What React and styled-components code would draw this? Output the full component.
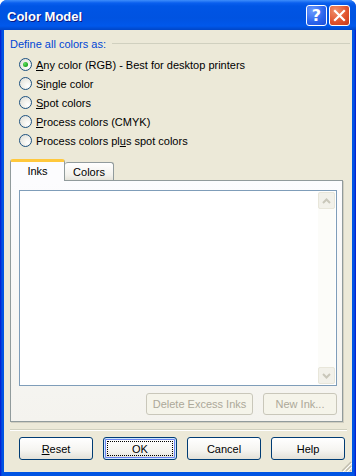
import styled, { createGlobalStyle, css } from 'styled-components'
import { useState } from 'react'

const Global = createGlobalStyle`
  html, body { margin: 0; padding: 0; background: #fff; }
  body { font-family: "Liberation Sans", Tahoma, sans-serif; font-size: 11px; color: #000; }
`

const options = [
  { pre: '', key: 'A', post: 'ny color (RGB) - Best for desktop printers' },
  { pre: 'S', key: 'i', post: 'ngle color' },
  { pre: '', key: 'S', post: 'pot colors' },
  { pre: '', key: 'P', post: 'rocess colors (CMYK)' },
  { pre: 'Process colors pl', key: 'u', post: 's spot colors' },
]

export default function App() {
  const [choice, setChoice] = useState(0)
  const [tab, setTab] = useState('inks')

  return (
    <>
      <Global />
      <Window>
        <TitleBar>
          <Title>Color Model</Title>
          <Caption>
            <CapButton $kind="help">?</CapButton>
            <CapButton $kind="close">
              <svg width="13" height="13" viewBox="0 0 13 13">
                <path d="M2 2 L11 11 M11 2 L2 11" stroke="#fff" strokeWidth="2.2" strokeLinecap="square" />
              </svg>
            </CapButton>
          </Caption>
        </TitleBar>

        <Client>
          <GroupHeader>
            <span>Define all colors as:</span>
            <Rule />
          </GroupHeader>

          <RadioList>
            {options.map((o, i) => (
              <RadioRow key={i} onClick={() => setChoice(i)}>
                <RadioDot $checked={choice === i} />
                <span>{o.pre}<u>{o.key}</u>{o.post}</span>
              </RadioRow>
            ))}
          </RadioList>

          <TabStrip>
            <Tab $active={tab === 'inks'} $w={55} onClick={() => setTab('inks')}>Inks</Tab>
            <Tab $active={tab === 'colors'} $w={49} onClick={() => setTab('colors')}>Colors</Tab>
          </TabStrip>
          <TabPanel>
            <ListBox>
              <ListArea />
              <ScrollBar>
                <ScrollBtn>
                  <svg width="9" height="6" viewBox="0 0 9 6">
                    <path d="M1 5 L4.5 1.5 L8 5" stroke="#c9c7ba" strokeWidth="2" fill="none" />
                  </svg>
                </ScrollBtn>
                <ScrollBtn>
                  <svg width="9" height="6" viewBox="0 0 9 6">
                    <path d="M1 1 L4.5 4.5 L8 1" stroke="#c9c7ba" strokeWidth="2" fill="none" />
                  </svg>
                </ScrollBtn>
              </ScrollBar>
            </ListBox>
            <PanelActions>
              <Button $w={107} disabled>Delete Excess Inks</Button>
              <Button $w={74} disabled>New Ink...</Button>
            </PanelActions>
          </TabPanel>

          <Separator />

          <Footer>
            <Button $w={74}><u>R</u>eset</Button>
            <Button $w={74} $default>OK</Button>
            <Button $w={74}>Cancel</Button>
            <Button $w={74}>Help</Button>
          </Footer>

          <Grip>
            <svg width="12" height="12" viewBox="0 0 12 12">
              <path d="M11 2 L2 11 M11 6 L6 11 M11 10 L10 11" stroke="#c0bdad" strokeWidth="1.4" />
              <path d="M12 3 L3 12 M12 7 L7 12" stroke="#fff" strokeWidth="1" />
            </svg>
          </Grip>
        </Client>
      </Window>
    </>
  )
}

const Window = styled.div`
  width: 356px;
  height: 476px;
  display: flex;
  flex-direction: column;
  background: linear-gradient(to right, #0019cf 0, #0831d9 1px, #0054e3 2px, #0054e3 354px, #0831d9 355px, #0019cf 356px);
  border-radius: 7px 7px 0 0;
  overflow: hidden;
`

const TitleBar = styled.div`
  height: 30px;
  flex: none;
  display: flex;
  align-items: center;
  justify-content: space-between;
  padding: 0 6px 0 7px;
  background: linear-gradient(#3e8dfb 0, #0a5fee 3px, #0055e5 6px, #0053e1 18px, #0058ec 26px, #004fd8 28px, #0046c8 30px);
`

const Title = styled.div`
  color: #fff;
  font-weight: bold;
  font-size: 13px;
  text-shadow: 1px 1px #0a1883;
  margin-top: 2px;
`

const Caption = styled.div`
  display: flex;
  gap: 2px;
  margin-top: 1px;
`

const CapButton = styled.div`
  width: 21px;
  height: 21px;
  box-sizing: border-box;
  border: 1px solid #fff;
  border-radius: 3px;
  display: flex;
  align-items: center;
  justify-content: center;
  color: #fff;
  font: bold 16px "DejaVu Sans", sans-serif;
  ${p => p.$kind === 'help' ? css`
    background: radial-gradient(circle at 30% 25%, #6b9bff, #2a63ec 60%, #1c4ed8);
  ` : css`
    background: radial-gradient(circle at 30% 25%, #f0906c, #e0512b 60%, #c6391a);
  `}
`

const Client = styled.div`
  flex: 1;
  margin: 0 4px 4px 4px;
  background: #ece9d8;
  display: flex;
  flex-direction: column;
  position: relative;
`

const GroupHeader = styled.div`
  display: flex;
  align-items: center;
  gap: 6px;
  margin: 7px 2px 0 6px;
  height: 13px;
  color: #0046d5;
`

const Rule = styled.div`
  flex: 1;
  height: 1px;
  background: #d0d0bf;
`

const RadioList = styled.div`
  display: flex;
  flex-direction: column;
  margin: 5px 0 0 15px;
`

const RadioRow = styled.label`
  display: flex;
  align-items: center;
  gap: 4px;
  height: 19px;
  cursor: default;
  u { text-decoration: underline; text-underline-offset: 1px; }
`

const RadioDot = styled.span`
  width: 13px;
  height: 13px;
  box-sizing: border-box;
  border-radius: 50%;
  border: 1px solid #1c5180;
  background: radial-gradient(circle at 70% 70%, #fff 0, #f4f3ee 35%, #dcdcd5 100%);
  display: flex;
  align-items: center;
  justify-content: center;
  &::after {
    content: '';
    width: 5px;
    height: 5px;
    border-radius: 50%;
    background: ${p => p.$checked ? 'radial-gradient(circle at 35% 35%, #5ee05e, #21a121 70%)' : 'transparent'};
  }
`

const TabStrip = styled.div`
  display: flex;
  align-items: flex-end;
  margin: 9px 0 0 6px;
  height: 21px;
  position: relative;
  z-index: 1;
`

const Tab = styled.div`
  width: ${p => p.$w}px;
  box-sizing: border-box;
  display: flex;
  align-items: center;
  justify-content: center;
  border: 1px solid #919b9c;
  border-bottom: none;
  border-radius: 3px 3px 0 0;
  ${p => p.$active ? css`
    height: 22px;
    margin-bottom: -1px;
    background: #fcfcfe;
    border-top: 3px solid #ffc83c;
    box-shadow: inset 0 -1px #fcfcfe;
    padding-bottom: 2px;
  ` : css`
    height: 18px;
    background: linear-gradient(#fff, #f3f2ed 70%, #e6e4da);
    border-left: none;
    padding-top: 1px;
  `}
`

const TabPanel = styled.div`
  margin: 0 9px 0 6px;
  height: 242px;
  box-sizing: border-box;
  border: 1px solid #919b9c;
  box-shadow: 1px 1px #d0cec0;
  background: linear-gradient(#fcfcfe, #f4f3ee);
  padding: 9px 5px 0 8px;
  display: flex;
  flex-direction: column;
`

const ListBox = styled.div`
  height: 196px;
  box-sizing: border-box;
  border: 1px solid #7f9db9;
  background: #fff;
  display: flex;
`

const ListArea = styled.div`
  flex: 1;
`

const ScrollBar = styled.div`
  width: 17px;
  margin: 1px 1px 1px 0;
  background: #fcfcf9;
  display: flex;
  flex-direction: column;
  justify-content: space-between;
`

const ScrollBtn = styled.div`
  height: 17px;
  box-sizing: border-box;
  border: 1px solid #e8e6da;
  border-radius: 2px;
  background: #f2f1ea;
  display: flex;
  align-items: center;
  justify-content: center;
`

const PanelActions = styled.div`
  display: flex;
  justify-content: flex-end;
  gap: 10px;
  margin-top: 7px;
`

const Button = styled.button`
  width: ${p => p.$w}px;
  height: ${p => p.disabled ? 22 : 23}px;
  box-sizing: border-box;
  font: 11px "Liberation Sans", Tahoma, sans-serif;
  color: #000;
  border: 1px solid #003c74;
  border-radius: 3px;
  background: linear-gradient(#fff, #f5f4f0 60%, #e3e1d8);
  padding: 0;
  position: relative;
  u { text-decoration: underline; text-underline-offset: 1px; }
  &:disabled {
    color: #aca899;
    border-color: #c9c7ba;
    background: #f5f4ea;
  }
  ${p => p.$default && css`
    box-shadow: inset 0 0 0 1px #cee7ff, inset 0 0 0 2px #6982ee;
    &::after {
      content: '';
      position: absolute;
      inset: 3px;
      border: 1px dotted #000;
    }
  `}
`

const Separator = styled.div`
  margin: 7px 5px 0 6px;
  height: 1px;
  border-top: 1px solid #d0d0bf;
  border-bottom: 1px solid #fff;
  height: 0;
`

const Footer = styled.div`
  display: flex;
  gap: 10px;
  margin: 6px 0 0 15px;
`

const Grip = styled.div`
  position: absolute;
  right: 0;
  bottom: 0;
  width: 12px;
  height: 12px;
  line-height: 0;
`
